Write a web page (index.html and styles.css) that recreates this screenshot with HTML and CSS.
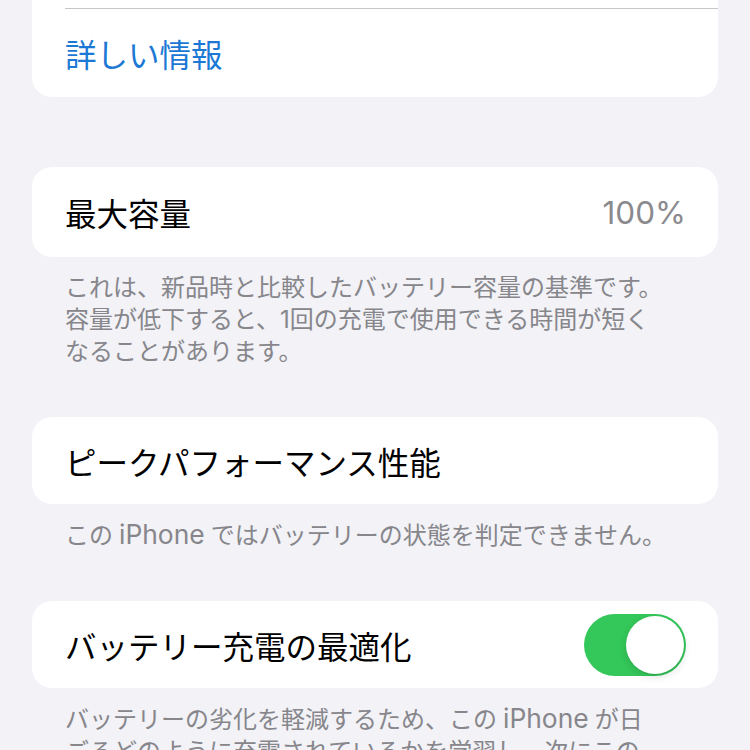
FILE: index.html
```html
<!DOCTYPE html>
<html lang="ja">
<head>
    <meta charset="UTF-8">
    <meta name="viewport" content="width=device-width, initial-scale=1.0">
    <title>バッテリーの状態と充電</title>
    <link rel="stylesheet" href="styles.css">
</head>
<body>
    <div class="settings">
        <section class="group group-first">
            <div class="cell cell-prev"></div>
            <div class="cell">
                <span class="link">詳しい情報</span>
            </div>
        </section>

        <section class="group">
            <div class="cell cell-tall">
                <span class="label">最大容量</span>
                <span class="value">100%</span>
            </div>
        </section>
        <p class="footnote footnote-first">これは、新品時と比較したバッテリー容量の基準です。容量が低下すると、1回の充電で使用できる時間が短くなることがあります。</p>

        <section class="group">
            <div class="cell">
                <span class="label">ピークパフォーマンス性能</span>
            </div>
        </section>
        <p class="footnote">この<span class="latin">iPhone</span>ではバッテリーの状態を判定できません。</p>

        <section class="group">
            <div class="cell">
                <span class="label">バッテリー充電の最適化</span>
                <button class="switch on" id="optimize-toggle" aria-pressed="true">
                    <span class="knob"></span>
                </button>
            </div>
        </section>
        <p class="footnote">バッテリーの劣化を軽減するため、この<span class="latin">iPhone</span>が日<br>ごろどのように充電されているかを学習し、次にこの<span class="latin">iPhone</span>を長時間充電する必要があるときまで80%以上の充電を待機します。</p>
    </div>

    <script>
        const toggle = document.getElementById('optimize-toggle');

        toggle.addEventListener('click', () => {
            toggle.classList.toggle('on');
            toggle.setAttribute('aria-pressed', toggle.classList.contains('on'));
        });
    </script>
</body>
</html>
```

FILE: styles.css
```css
* {
    margin: 0;
    padding: 0;
    box-sizing: border-box;
}

body {
    font-family: "Inter", "Noto Sans CJK JP", sans-serif;
    background-color: #f2f2f7;
    color: #000000;
    overflow: hidden;
}

.settings {
    display: flex;
    flex-direction: column;
    padding: 0 32px;
}

.group {
    background-color: #ffffff;
    border-radius: 20px;
    margin-top: 49px;
}

/* list continues above the top of the screen */
.group-first {
    margin-top: -39px;
    margin-bottom: 21px;
}

.cell {
    display: flex;
    align-items: center;
    justify-content: space-between;
    min-height: 87px;
    margin-left: 33px;
    padding-right: 32px;
    font-size: 31.5px;
}

.cell + .cell {
    min-height: 89px;
    border-top: 1px solid #c6c6c8;
}

.cell-prev {
    min-height: 47px;
}

.cell-tall {
    min-height: 90px;
}

.link {
    color: #1b78d4;
}

.value {
    color: #8a8a8e;
}

.footnote {
    padding: 16px 47px 0 33px;
    font-size: 24px;
    line-height: 32px;
    color: #86868b;
}

.footnote-first {
    padding-top: 15px;
}

.latin {
    font-size: 1.1em;
    line-height: 1;
    margin: 0 6px;
}

.switch {
    display: flex;
    justify-content: flex-start;
    align-items: center;
    width: 102px;
    height: 62px;
    padding: 2px;
    border: none;
    border-radius: 31px;
    background-color: #e9e9eb;
    cursor: pointer;
    transition: background-color 0.2s;
}

.switch.on {
    justify-content: flex-end;
    background-color: #34c759;
}

.knob {
    width: 58px;
    height: 58px;
    border-radius: 50%;
    background-color: #ffffff;
    box-shadow: 0 3px 8px rgba(0, 0, 0, 0.12), 0 1px 1px rgba(0, 0, 0, 0.08);
}
```
